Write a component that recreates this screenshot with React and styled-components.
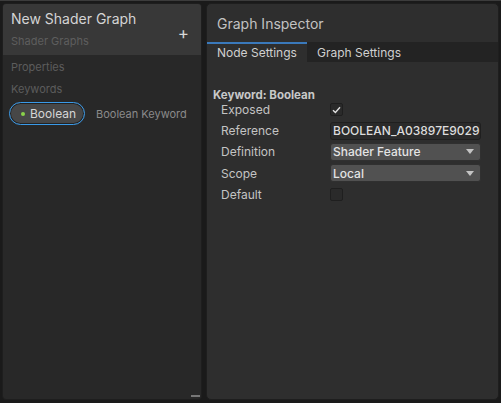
import React from 'react';
import styled, { createGlobalStyle } from 'styled-components';

const Global = createGlobalStyle`
  html, body {
    margin: 0;
    padding: 0;
    background: #1a1a1a;
  }
  body {
    font-family: Inter, "Noto Sans", sans-serif;
    width: 501px;
    height: 403px;
    overflow: hidden;
  }
`;

const Screen = styled.div`
  width: 501px;
  height: 403px;
  box-sizing: border-box;
  border-top: 1px solid #3c3c3c;
  padding: 2px 2px 3px 2px;
  display: flex;
  gap: 4px;
`;

const Blackboard = styled.div`
  width: 198px;
  display: flex;
  flex-direction: column;
  background: #282828;
  border: 1px solid #1e1e1e;
  border-radius: 4px;
  overflow: hidden;
  position: relative;
`;

const BoardHeader = styled.div`
  height: 51px;
  background: #383838;
  padding: 6px 0 0 8px;
  box-sizing: border-box;
  position: relative;
`;

const Title = styled.div`
  font-size: 14px;
  color: #d4d4d4;
  line-height: 18px;
`;

const SubTitle = styled.div`
  font-size: 11px;
  color: #5e5e5e;
  margin-top: 6px;
`;

const AddButton = styled.div`
  position: absolute;
  right: 12px;
  top: 19px;
  font-size: 17px;
  color: #d8d8d8;
`;

const Section = styled.div`
  font-size: 11px;
  color: #5c5c5c;
  padding-left: 8px;
  margin-top: ${(p) => p.mt}px;
`;

const PillRow = styled.div`
  display: flex;
  align-items: center;
  padding-left: 6px;
  margin-top: 6px;
  gap: 11px;
`;

const Pill = styled.div`
  height: 23px;
  width: 76px;
  box-sizing: border-box;
  border: 1px solid #3a9ae8;
  border-radius: 12px;
  background: #474747;
  display: flex;
  align-items: center;
  padding-left: 11px;
  gap: 5px;
  font-size: 12px;
  color: #d6d6d6;
  box-shadow: inset 0 0 0 1px #222;
`;

const Dot = styled.span`
  width: 4px;
  height: 4px;
  border-radius: 50%;
  background: #8ad24a;
`;

const PillType = styled.span`
  font-size: 11px;
  color: #8a8a8a;
`;

const Grip = styled.div`
  position: absolute;
  right: 1px;
  bottom: 2px;
  width: 9px;
  height: 2px;
  background: #777;
`;

const Inspector = styled.div`
  flex: 1;
  display: flex;
  flex-direction: column;
  background: #2e2e2e;
  border: 1px solid #1e1e1e;
  border-radius: 5px;
  overflow: hidden;
`;

const InspectorHeader = styled.div`
  height: 38px;
  padding-left: 10px;
  display: flex;
  align-items: center;
  font-size: 14px;
  color: #c2c2c2;
`;

const Tabs = styled.div`
  display: flex;
  background: #232323;
  height: 20px;
`;

const Tab = styled.div`
  width: ${(p) => p.w}px;
  box-sizing: border-box;
  background: ${(p) => (p.active ? '#2e2e2e' : 'transparent')};
  border-top: 2px solid ${(p) => (p.active ? '#3a79bb' : 'transparent')};
  font-size: 12px;
  color: #d0d0d0;
  padding-left: ${(p) => p.pl}px;
  line-height: 17px;
`;

const Body = styled.div`
  padding: 26px 0 0 6px;
`;

const Heading = styled.div`
  font-size: 11.5px;
  font-weight: 700;
  color: #c8c8c8;
  line-height: 14px;
  margin-bottom: -3px;
`;

const Row = styled.div`
  display: grid;
  grid-template-columns: 109px 151px;
  align-items: center;
  height: 21.2px;
  padding-left: 8px;
`;

const Label = styled.div`
  font-size: 12px;
  color: #c4c4c4;
`;

const Check = styled.div`
  width: 13px;
  height: 13px;
  box-sizing: border-box;
  background: #2a2a2a;
  border: 1px solid #1f1f1f;
  border-radius: 2px;
  display: flex;
  align-items: center;
  justify-content: center;
`;

const TextField = styled.div`
  height: 18px;
  box-sizing: border-box;
  background: #2a2a2a;
  border: 1px solid #1f1f1f;
  border-radius: 3px;
  font-size: 12px;
  font-weight: 500;
  color: #dcdcdc;
  padding-left: 2px;
  line-height: 16px;
  overflow: hidden;
  white-space: nowrap;
`;

const Dropdown = styled.div`
  height: 18px;
  box-sizing: border-box;
  background: #515151;
  border: 1px solid #303030;
  border-radius: 3px;
  font-size: 12px;
  font-weight: 500;
  color: #e4e4e4;
  padding: 0 6px 0 2px;
  display: flex;
  align-items: center;
  justify-content: space-between;
`;

const Caret = styled.span`
  width: 0;
  height: 0;
  border-left: 4px solid transparent;
  border-right: 4px solid transparent;
  border-top: 5px solid #c4c4c4;
`;

const Tick = () => (
  <svg width="9" height="8" viewBox="0 0 9 8">
    <path d="M1 4.2 L3.4 6.5 L8 1.3" fill="none" stroke="#e0e0e0" strokeWidth="1.4" />
  </svg>
);

export default function App() {
  return (
    <>
      <Global />
      <Screen>
        <Blackboard>
          <BoardHeader>
            <Title>New Shader Graph</Title>
            <SubTitle>Shader Graphs</SubTitle>
            <AddButton>+</AddButton>
          </BoardHeader>
          <Section mt={5}>Properties</Section>
          <Section mt={8}>Keywords</Section>
          <PillRow>
            <Pill>
              <Dot />
              Boolean
            </Pill>
            <PillType>Boolean Keyword</PillType>
          </PillRow>
          <Grip />
        </Blackboard>
        <Inspector>
          <InspectorHeader>Graph Inspector</InspectorHeader>
          <Tabs>
            <Tab active w={100} pl={10}>Node Settings</Tab>
            <Tab w={110} pl={10}>Graph Settings</Tab>
          </Tabs>
          <Body>
            <Heading>Keyword: Boolean</Heading>
            <Row>
              <Label>Exposed</Label>
              <Check><Tick /></Check>
            </Row>
            <Row>
              <Label>Reference</Label>
              <TextField>BOOLEAN_A03897E9029</TextField>
            </Row>
            <Row>
              <Label>Definition</Label>
              <Dropdown>Shader Feature<Caret /></Dropdown>
            </Row>
            <Row>
              <Label>Scope</Label>
              <Dropdown>Local<Caret /></Dropdown>
            </Row>
            <Row>
              <Label>Default</Label>
              <Check />
            </Row>
          </Body>
        </Inspector>
      </Screen>
    </>
  );
}
